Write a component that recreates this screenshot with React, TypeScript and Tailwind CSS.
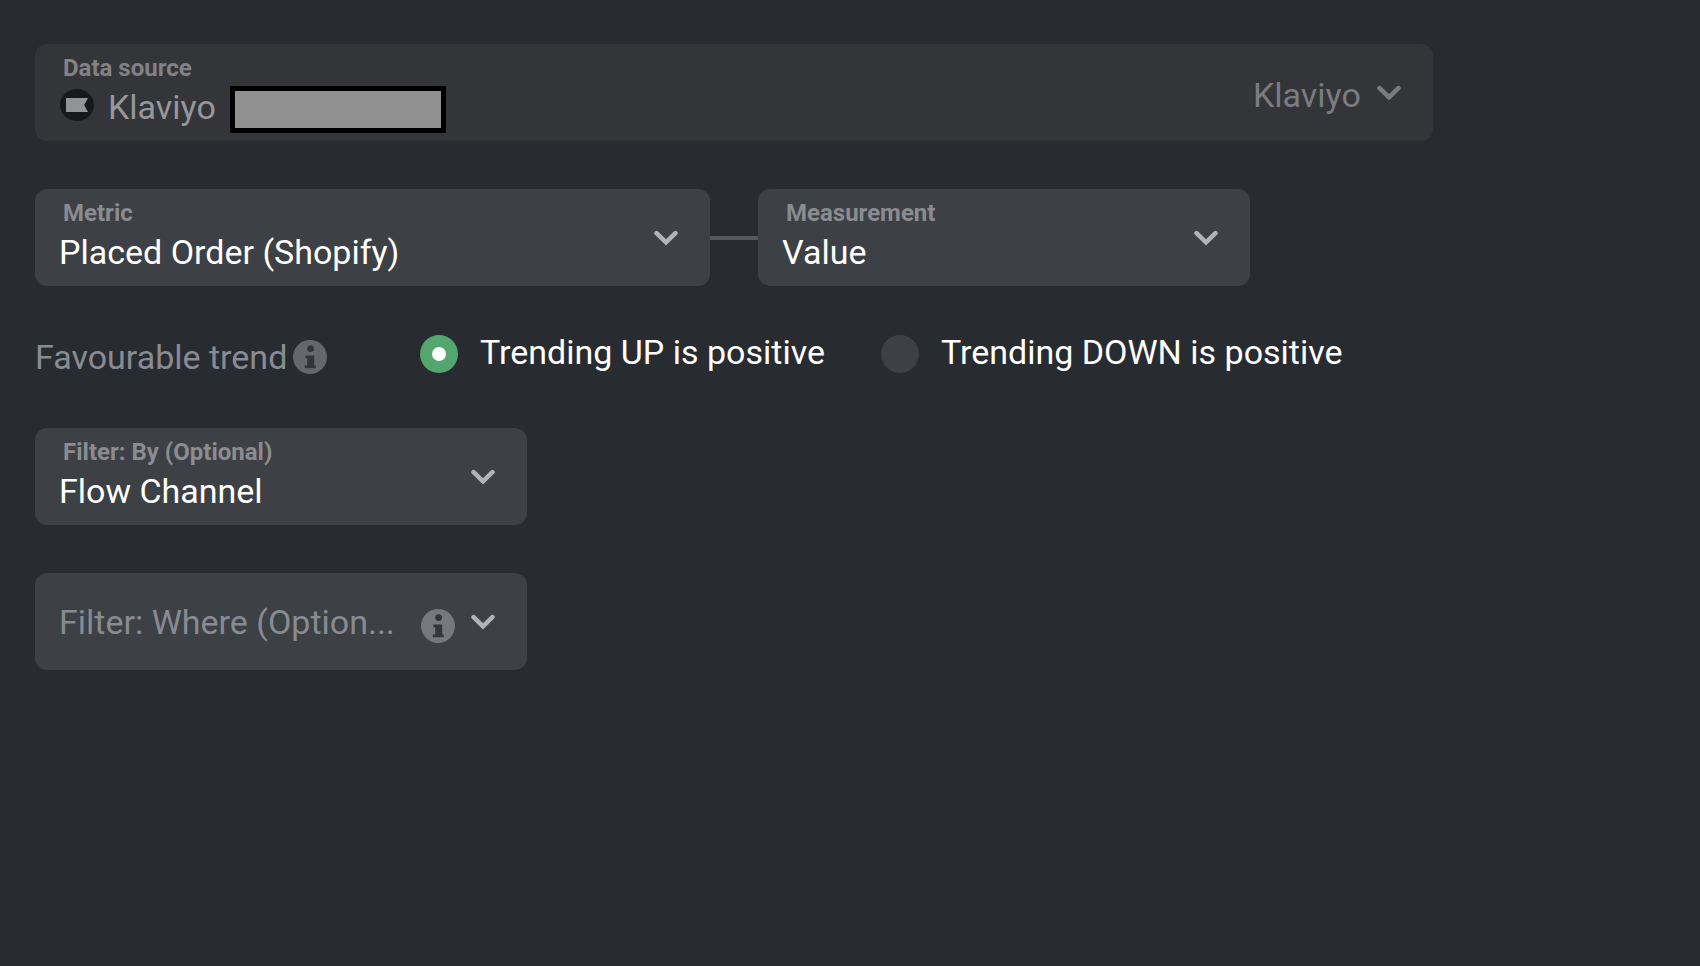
import React from "react";

const Chevron = ({ className = "" }: { className?: string }) => (
  <svg
    viewBox="0 0 24 16"
    fill="none"
    stroke="currentColor"
    strokeWidth="4.6"
    strokeLinecap="round"
    aria-hidden="true"
    className={`pointer-events-none h-4 w-6 ${className}`}
  >
    <path d="M2.6 3.2 12 12.4l9.4-9.2" />
  </svg>
);

const InfoIcon = ({ className = "" }: { className?: string }) => (
  <svg viewBox="0 0 34 34" aria-hidden="true" className={`size-[34px] shrink-0 ${className}`}>
    <circle cx="17" cy="17" r="17" fill="currentColor" />
    <circle cx="17.6" cy="8.6" r="3.4" fill="#33353a" />
    <path
      d="M12.4 15.4h8.8v10.2h1.6v2.6H11.8v-2.6h2.4v-7.4h-1.8z"
      fill="#33353a"
    />
  </svg>
);

const KlaviyoLogo = () => (
  <svg viewBox="0 0 34 34" aria-hidden="true" className="size-[34px] shrink-0">
    <ellipse cx="17" cy="17" rx="17" ry="16" fill="#17181a" />
    <path d="M6 10h22l-3.8 7L28 24H6z" fill="#929395" />
  </svg>
);

type FieldProps = {
  id: string;
  label: string;
  value: string;
  className?: string;
};

const SelectField = ({ id, label, value, className = "" }: FieldProps) => (
  <div className={`relative rounded-xl bg-[#3d4044] ${className}`}>
    <label
      htmlFor={id}
      className="pointer-events-none absolute top-[10px] left-7 text-2xl leading-7 font-bold text-[#8b8c91]"
    >
      {label}
    </label>
    <select
      id={id}
      className="block w-full appearance-none rounded-xl pt-[43px] pr-16 pb-[14px] pl-6 leading-10 text-white"
    >
      <option>{value}</option>
    </select>
    <Chevron className="absolute inset-y-0 right-8 my-auto text-[#b1b4b6]" />
  </div>
);

const TrendOption = ({ label, checked }: { label: string; checked?: boolean }) => (
  <label className="flex items-center gap-[22px] text-white">
    <span className="grid size-[38px] place-items-center">
      <input
        type="radio"
        name="trend"
        defaultChecked={checked}
        className="peer col-start-1 row-start-1 size-[38px] appearance-none rounded-full bg-[#3d4044] checked:bg-[#53a66d]"
      />
      <span className="pointer-events-none col-start-1 row-start-1 hidden size-[14px] rounded-full bg-white peer-checked:block" />
    </span>
    <span className="pb-1 leading-9">{label}</span>
  </label>
);

const App = () => {
  return (
    <main className="min-h-screen bg-[#282b30] px-[35px] pt-11 pb-11 font-[Roboto,sans-serif] text-[34px]">
      <form className="flex flex-col gap-12">
        <div className="flex w-full max-w-[1398px] items-center justify-between rounded-xl bg-[#343539] pl-[25px]">
          <div className="pt-[10px] pb-2">
            <label
              htmlFor="source"
              className="block pl-[3px] text-2xl leading-7 font-bold text-[#828286]"
            >
              Data source
            </label>
            <div className="flex items-start text-[#97979b]">
              <div className="pt-[6px]">
                <KlaviyoLogo />
              </div>
              <span className="ml-[14px] leading-[51px]">Klaviyo</span>
              <span className="mt-1 ml-[14px] h-[47px] w-[216px] border-[5px] border-black bg-[#919191]" />
            </div>
          </div>
          <div className="relative text-[#7b7b80]">
            <select
              id="source"
              disabled
              className="block appearance-none pt-1 pr-[72px] leading-10 opacity-100"
            >
              <option>Klaviyo</option>
            </select>
            <Chevron className="absolute inset-y-0 right-8 my-auto" />
          </div>
        </div>

        <div className="flex items-center">
          <SelectField
            id="metric"
            label="Metric"
            value="Placed Order (Shopify)"
            className="w-full max-w-[675px]"
          />
          <div className="h-1 w-12 shrink-0 bg-[#55575b]" />
          <SelectField
            id="measurement"
            label="Measurement"
            value="Value"
            className="w-full max-w-[492px]"
          />
        </div>

        <fieldset className="flex items-start text-[#888b93]">
          <div className="flex w-[385px] items-center gap-[6px] leading-[46px]">
            <span>Favourable trend</span>
            <InfoIcon className="text-[#66676b]" />
          </div>
          <div className="flex flex-wrap gap-x-14">
            <TrendOption label="Trending UP is positive" checked />
            <TrendOption label="Trending DOWN is positive" />
          </div>
        </fieldset>

        <SelectField
          id="filter-by"
          label="Filter: By (Optional)"
          value="Flow Channel"
          className="w-full max-w-[492px]"
        />

        <div className="relative w-full max-w-[492px] rounded-xl bg-[#3d4044]">
          <select
            id="filter-where"
            aria-label="Filter: Where"
            className="block w-full appearance-none rounded-xl pt-[29px] pr-28 pb-7 pl-6 leading-10 text-[#888b93]"
          >
            <option>Filter: Where (Option...</option>
          </select>
          <InfoIcon className="absolute top-9 right-[72px] text-[#77787c]" />
          <Chevron className="absolute inset-y-0 right-8 my-auto text-[#b1b4b6]" />
        </div>
      </form>
    </main>
  );
};

export default App;
